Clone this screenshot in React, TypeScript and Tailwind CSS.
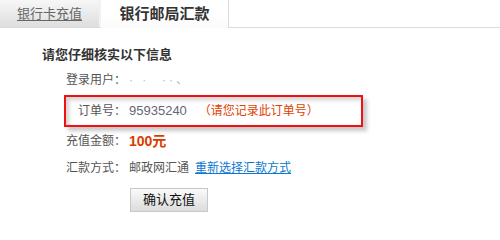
const font = { fontFamily: '"Liberation Sans", Arial, "Noto Sans CJK SC", sans-serif' }

export default function App() {
  return (
    <div className="w-[500px] h-[215px] bg-white overflow-hidden text-[12px] text-[#555]" style={font}>
      {/* 标签页 */}
      <div className="flex h-[28px] border-b border-[#dcdcdc]">
        <div className="w-[101px] h-[27px] bg-gradient-to-b from-[#f7f7f7] to-[#dedede] border-r-2 border-[#f2f2f2] flex items-center justify-center">
          <span className="text-[13px] text-[#666] underline underline-offset-2">银行卡充值</span>
        </div>
        <div className="w-[128px] h-[28px] -mb-px bg-gradient-to-b from-white via-white to-[#fafafa] border-r border-[#dcdcdc] flex items-center justify-center">
          <span className="text-[15px] font-bold text-[#333]">银行邮局汇款</span>
        </div>
      </div>

      {/* 内容 */}
      <div className="pl-[42px] pt-[19px]">
        <h1 className="text-[13px] leading-[16px] font-bold text-[#333]">请您仔细核实以下信息</h1>

        <div className="ml-[22px]">
          <div className="flex h-[20px] items-center mt-[7px]">
            <span className="w-[65px] pl-[2px]">登录用户：</span>
            <span className="text-[#bbb] tracking-[3px]">· ·&nbsp;&nbsp;··、</span>
          </div>

          <div className="flex h-[32px] items-center mt-[5px] w-[299px] border-2 border-[#f01010] shadow-[4px_4px_4px_rgba(0,0,0,0.22),inset_3px_3px_4px_rgba(0,0,0,0.18)]">
            <span className="w-[63px] text-right pr-[3px]">订单号：</span>
            <span className="text-[#667] text-[13px]">95935240</span>
            <span className="ml-[12px] text-[#e04000]">（请您记录此订单号）</span>
          </div>

          <div className="flex h-[20px] items-center mt-[4px]">
            <span className="w-[65px] pl-[2px]">充值金额：</span>
            <span className="text-[14px] font-bold text-[#d83c00]">100元</span>
          </div>

          <div className="flex h-[20px] items-center mt-[7px]">
            <span className="w-[65px] pl-[2px]">汇款方式：</span>
            <span className="text-[#555]">邮政网汇通</span>
            <a className="ml-[6px] text-[#0a78d0] underline">重新选择汇款方式</a>
          </div>

          <button className="ml-[66px] mt-[10px] w-[78px] h-[24px] border border-[#c8c8c8] bg-gradient-to-b from-[#fafafa] to-[#dcdcdc] text-[13px] text-[#111]">
            确认充值
          </button>
        </div>
      </div>
    </div>
  )
}
